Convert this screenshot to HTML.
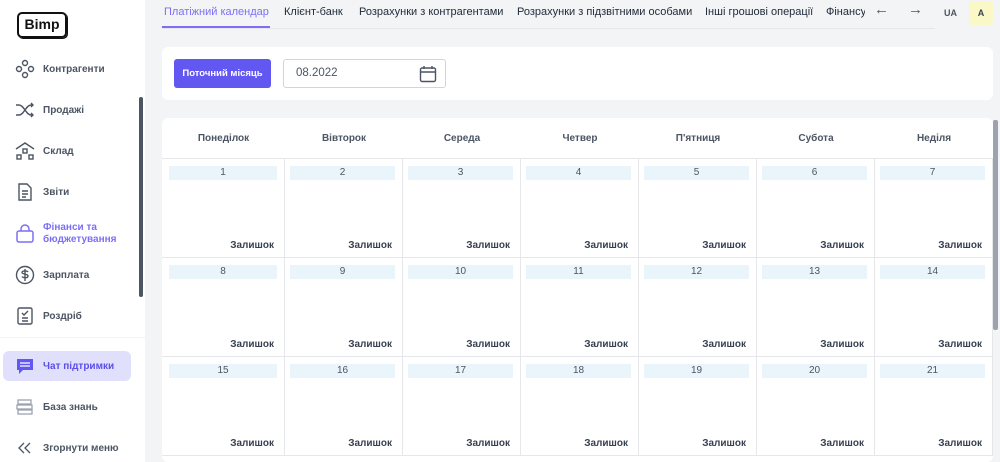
<!DOCTYPE html>
<html><head><meta charset="utf-8"><style>
*{box-sizing:border-box;margin:0;padding:0}
body{width:1000px;height:462px;overflow:hidden;background:#f3f4f6;font-family:"Liberation Sans",sans-serif;position:relative;color:#374151}
.side{position:absolute;left:0;top:0;width:145px;height:462px;background:#fff}
.logo{position:absolute;left:17px;top:12px;width:50px;height:26px;border:2.5px solid #111;border-radius:5px;font-weight:bold;font-size:14px;text-align:center;line-height:21px;color:#111;box-shadow:1px 1px 0 #111}
.it{position:absolute;left:15px;display:flex;align-items:center;font-size:10px;font-weight:bold;color:#4b5563}
.it svg{width:20px;height:20px;margin-right:8px;flex:none}
.sb{position:absolute;left:139px;top:97px;width:4px;height:200px;background:#4b5563;border-radius:2px}
.chat{position:absolute;left:3px;top:351px;width:128px;height:30px;background:#e0e0fd;border-radius:6px}
.tabs{position:absolute;left:0;top:0;width:865px;overflow:hidden;height:29px;font-size:11px;color:#1f2937}
.tabs div{position:absolute;top:0;line-height:25px;white-space:nowrap}
.tabs .a{color:#7c6ff5;border-bottom:2px solid #7c6ff5;padding:0 2px;height:28px}
.tline{position:absolute;left:162px;top:28px;width:773px;height:1px;background:#e5e7eb}
.card{position:absolute;background:#fff;border-radius:6px}
.btn{position:absolute;left:174px;top:59px;width:97px;height:29px;background:#6357f2;border-radius:3px;color:#fff;font-size:9.5px;font-weight:bold;text-align:center;line-height:29px}
.inp{position:absolute;left:283px;top:59px;width:163px;height:29px;border:1px solid #d1d5db;border-radius:3px;font-size:11.5px;padding-left:12px;line-height:27px;color:#4b5563}
.grid{position:absolute;left:162px;top:118px;width:831px}
.hd{display:flex;height:41px;border-bottom:1px solid #e5e7eb}
.hd div{font-size:10px;font-weight:bold;color:#4b5563;text-align:center;line-height:42px}
.row{display:flex;height:99px;border-bottom:1px solid #e5e7eb}
.c{position:relative;border-right:1px solid #e5e7eb;height:100%}
.c .n{position:absolute;left:7px;right:7px;top:7px;height:14px;background:#e9f4fb;font-size:10px;text-align:center;line-height:14px;color:#4b5563}
.c .z{position:absolute;right:10px;bottom:6px;font-size:10px;font-weight:bold;color:#374151}
.w0{width:123px}.w{width:118px}
.c.w .n{left:5px;right:7px}
.rsb{position:absolute;left:993px;top:120px;width:5px;height:210px;background:#9ca3af;border-radius:2px}
</style></head><body>
<div class="side">
<div class="logo">Bimp</div>
<div class="it" style="top:59px"><svg viewBox="0 0 20 20" fill="none" stroke="#4b5563" stroke-width="1.4"><circle cx="10" cy="4" r="2.5"/><circle cx="4" cy="10" r="2.5"/><circle cx="16" cy="10" r="2.5"/><circle cx="10" cy="16" r="2.5"/></svg>Контрагенти</div>
<div class="it" style="top:100px"><svg viewBox="0 0 20 20" fill="none" stroke="#4b5563" stroke-width="1.4"><path d="M1 5h3c5 0 7 10 12 10h2M1 15h3c5 0 7-10 12-10h2M16 3l2 2-2 2M16 13l2 2-2 2"/></svg>Продажі</div>
<div class="it" style="top:141px"><svg viewBox="0 0 20 20" fill="none" stroke="#4b5563" stroke-width="1.4"><path d="M1 8l9-6 9 6"/><rect x="8" y="8" width="4" height="4"/><rect x="2" y="14" width="4" height="4"/><rect x="14" y="14" width="4" height="4"/></svg>Склад</div>
<div class="it" style="top:182px"><svg viewBox="0 0 20 20" fill="none" stroke="#4b5563" stroke-width="1.4"><path d="M4 2h8l4 4v12H4z"/><path d="M7 9h6M7 12h6M7 15h4"/></svg>Звіти</div>
<div class="it" style="top:222px;color:#7c6ff5;line-height:12px"><svg viewBox="0 0 20 20" fill="none" stroke="#7c6ff5" stroke-width="1.5"><rect x="2" y="7" width="16" height="11" rx="2"/><path d="M6 7V5a4 4 0 0 1 8 0v2"/></svg>Фінанси та<br>бюджетування</div>
<div class="it" style="top:265px"><svg viewBox="0 0 20 20" fill="none" stroke="#4b5563" stroke-width="1.4"><circle cx="10" cy="10" r="8.5"/><path d="M13 7c-1-1.5-6-1.5-6 .5s6 1 6 3.5-5 2-6 .5M10 4v12"/></svg>Зарплата</div>
<div class="it" style="top:306px"><svg viewBox="0 0 20 20" fill="none" stroke="#4b5563" stroke-width="1.4"><rect x="3" y="2" width="14" height="16" rx="1.5"/><path d="M7 7l2 2 4-4M7 12h6M7 15h6"/></svg>Роздріб</div>
<div class="sb"></div>
<div style="position:absolute;left:0;top:337px;width:145px;height:1px;background:#f3f4f6"></div>
<div class="chat"></div>
<div class="it" style="top:356px;color:#5b4ee8"><svg viewBox="0 0 20 20"><path d="M2 3h16v11H8l-4 4v-4H2z" fill="#6357f2"/><path d="M5 7h10M5 10h10" stroke="#fff" stroke-width="1.2"/></svg>Чат підтримки</div>
<div class="it" style="top:397px"><svg viewBox="0 0 20 20" fill="none" stroke="#9ca3af" stroke-width="1.3"><rect x="3" y="3" width="13" height="4"/><rect x="2" y="8" width="15" height="4"/><rect x="3" y="13" width="14" height="4"/></svg>База знань</div>
<div class="it" style="top:438px"><svg viewBox="0 0 20 20" fill="none" stroke="#4b5563" stroke-width="1.3"><path d="M9 5l-5 5 5 5M15 5l-5 5 5 5"/></svg>Згорнути меню</div>
</div>
<div class="tline"></div>
<div class="tabs"><div class="a" style="left:162px;width:108px">Платіжний календар</div><div style="left:284px">Клієнт-банк</div><div style="left:359px">Розрахунки з контрагентами</div><div style="left:517px">Розрахунки з підзвітними особами</div><div style="left:705px">Інші грошові операції</div><div style="left:826px">Фінансу</div></div>
<div style="position:absolute;left:874px;top:1px;font-size:15px;color:#4b5563">←</div>
<div style="position:absolute;left:908px;top:1px;font-size:15px;color:#4b5563">→</div>
<div style="position:absolute;left:944px;top:8px;font-size:9px;font-weight:bold;color:#4b5563">UA</div>
<div style="position:absolute;left:969px;top:1px;width:24px;height:24px;background:#fbf8c8;border-radius:3px;font-size:9px;font-weight:bold;text-align:center;line-height:24px">A</div>
<div class="card" style="left:162px;top:47px;width:831px;height:53px"></div>
<div class="btn">Поточний місяць</div>
<div class="inp">08.2022<svg style="position:absolute;right:8px;top:5px" width="18" height="18" viewBox="0 0 18 18" fill="none" stroke="#4b5563" stroke-width="1.4"><rect x="1.5" y="3" width="15" height="13.5" rx="1.5"/><path d="M1.5 7h15M5 1v3M13 1v3"/></svg></div>
<div class="card" style="left:162px;top:118px;width:831px;height:344px"></div>
<div class="grid">
<div class="hd"><div class="w0">Понеділок</div><div class="w">Вівторок</div><div class="w">Середа</div><div class="w">Четвер</div><div class="w">П'ятниця</div><div class="w">Субота</div><div class="w">Неділя</div></div>
<div class="row"><div class="c w0"><div class="n">1</div><div class="z">Залишок</div></div><div class="c w"><div class="n">2</div><div class="z">Залишок</div></div><div class="c w"><div class="n">3</div><div class="z">Залишок</div></div><div class="c w"><div class="n">4</div><div class="z">Залишок</div></div><div class="c w"><div class="n">5</div><div class="z">Залишок</div></div><div class="c w"><div class="n">6</div><div class="z">Залишок</div></div><div class="c w"><div class="n">7</div><div class="z">Залишок</div></div></div>
<div class="row"><div class="c w0"><div class="n">8</div><div class="z">Залишок</div></div><div class="c w"><div class="n">9</div><div class="z">Залишок</div></div><div class="c w"><div class="n">10</div><div class="z">Залишок</div></div><div class="c w"><div class="n">11</div><div class="z">Залишок</div></div><div class="c w"><div class="n">12</div><div class="z">Залишок</div></div><div class="c w"><div class="n">13</div><div class="z">Залишок</div></div><div class="c w"><div class="n">14</div><div class="z">Залишок</div></div></div>
<div class="row"><div class="c w0"><div class="n">15</div><div class="z">Залишок</div></div><div class="c w"><div class="n">16</div><div class="z">Залишок</div></div><div class="c w"><div class="n">17</div><div class="z">Залишок</div></div><div class="c w"><div class="n">18</div><div class="z">Залишок</div></div><div class="c w"><div class="n">19</div><div class="z">Залишок</div></div><div class="c w"><div class="n">20</div><div class="z">Залишок</div></div><div class="c w"><div class="n">21</div><div class="z">Залишок</div></div></div>
</div>
<div class="rsb"></div>
</body></html>
